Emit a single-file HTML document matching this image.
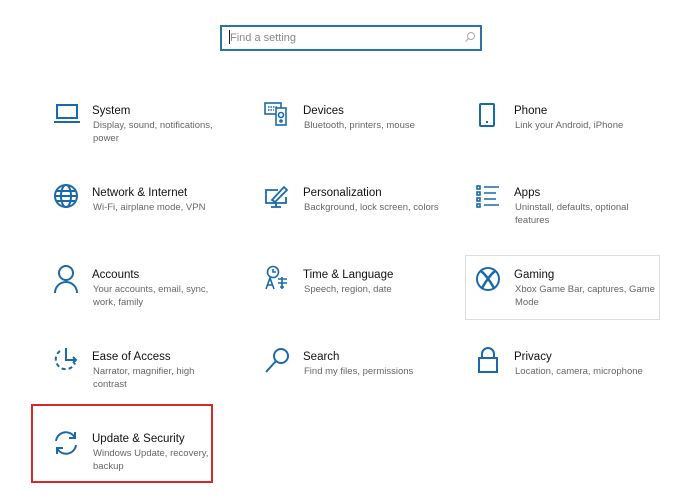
<!DOCTYPE html>
<html><head><meta charset="utf-8"><style>
body{margin:0;width:700px;height:500px;background:#fff;position:relative;font-family:"Liberation Sans",sans-serif;overflow:hidden}
.t{position:absolute;font-size:11.5px;color:#111;white-space:nowrap;margin-top:2px}
.s{position:absolute;font-size:9.5px;color:#666;line-height:12.5px;width:130px;margin-top:1px}
svg{position:absolute;fill:none;stroke:#1a6aa8;stroke-width:2;margin-top:2px}
</style></head><body>
<div style="position:absolute;left:220px;top:25px;width:258px;height:22px;border:2px solid #2a73a8"></div>
<div style="position:absolute;left:229px;top:30px;width:1px;height:14px;background:#222"></div>
<div class="t" style="left:230px;top:30px;color:#888;font-size:11px">Find a setting</div>
<svg style="left:464px;top:29px;stroke:#aaa;stroke-width:1" width="12" height="12"><circle cx="7" cy="5" r="3.5"/><path d="M4.5 7.5L1.5 10.5"/></svg>

<div style="position:absolute;left:465px;top:255px;width:193px;height:63px;border:1px solid #ddd"></div>
<div style="position:absolute;left:31px;top:404px;width:178px;height:75px;border:2px solid #d42a2a"></div>

<!-- col1 -->
<div class="t" style="left:92px;top:103px">System</div>
<div class="s" style="left:93px;top:119px">Display, sound, notifications, power</div>
<svg style="left:53px;top:100px" width="28" height="24"><rect x="4" y="3" width="20" height="13"/><path d="M1 20h26"/></svg>

<div class="t" style="left:92px;top:185px">Network &amp; Internet</div>
<div class="s" style="left:93px;top:201px">Wi-Fi, airplane mode, VPN</div>
<svg style="left:53px;top:181px" width="26" height="26"><circle cx="13" cy="13" r="11"/><ellipse cx="13" cy="13" rx="5" ry="11"/><path d="M2 13h22M4 8h18M4 18h18"/></svg>

<div class="t" style="left:92px;top:267px">Accounts</div>
<div class="s" style="left:93px;top:283px">Your accounts, email, sync, work, family</div>
<svg style="left:53px;top:262px" width="26" height="30"><circle cx="13" cy="9" r="7"/><path d="M2 29a11 11 0 0 1 22 0"/></svg>

<div class="t" style="left:92px;top:349px">Ease of Access</div>
<div class="s" style="left:93px;top:365px">Narrator, magnifier, high contrast</div>
<svg style="left:52px;top:344px" width="28" height="28"><path d="M8 5A10 10 0 1 0 23 17" stroke-dasharray="4 3"/><path d="M14 2v12h10M21 11l3 3-3 3"/></svg>

<div class="t" style="left:92px;top:431px">Update &amp; Security</div>
<div class="s" style="left:93px;top:447px">Windows Update, recovery, backup</div>
<svg style="left:52px;top:427px" width="28" height="28"><path d="M4 12A10 10 0 0 1 23 9M24 16A10 10 0 0 1 5 19M23 3v6h-6M5 25v-6h6"/></svg>

<!-- col2 -->
<div class="t" style="left:303px;top:103px">Devices</div>
<div class="s" style="left:304px;top:119px;width:150px">Bluetooth, printers, mouse</div>
<svg style="left:264px;top:99px;stroke-width:1.6" width="28" height="28"><rect x="1" y="2" width="16" height="11"/><path d="M4 6h10M4 9h6" stroke-dasharray="1.5 1"/><rect x="12" y="7" width="10" height="17" fill="#fff"/><circle cx="17" cy="14" r="2.5"/><circle cx="17" cy="20" r="1"/></svg>

<div class="t" style="left:303px;top:185px">Personalization</div>
<div class="s" style="left:304px;top:201px;width:160px">Background, lock screen, colors</div>
<svg style="left:264px;top:182px;stroke-width:1.8" width="28" height="28"><path d="M14 6H2v13h20v-6M12 19v4M7 23h10M8 16l12-13 3 3-12 12z"/></svg>

<div class="t" style="left:303px;top:267px">Time &amp; Language</div>
<div class="s" style="left:304px;top:283px;width:150px">Speech, region, date</div>
<svg style="left:264px;top:263px;stroke-width:1.6" width="28" height="28"><circle cx="9" cy="7" r="5.5"/><path d="M9 4v3h3M2 24l4-11 4 11M3.5 20h5M14 14h9M18 12v12M14 18h9M16 22h4"/></svg>

<div class="t" style="left:303px;top:349px">Search</div>
<div class="s" style="left:304px;top:365px;width:150px">Find my files, permissions</div>
<svg style="left:264px;top:344px" width="28" height="28"><circle cx="17" cy="10" r="7"/><path d="M12 15L2 26"/></svg>

<!-- col3 -->
<div class="t" style="left:514px;top:103px">Phone</div>
<div class="s" style="left:515px;top:119px;width:140px">Link your Android, iPhone</div>
<svg style="left:478px;top:100px" width="20" height="28"><rect x="2" y="2" width="14" height="22" rx="1"/><path d="M8 20h2"/></svg>

<div class="t" style="left:514px;top:185px">Apps</div>
<div class="s" style="left:515px;top:201px;width:130px">Uninstall, defaults, optional features</div>
<svg style="left:475px;top:182px;stroke-width:1.6" width="28" height="26"><rect x="2" y="2" width="3" height="3"/><rect x="2" y="8" width="3" height="3"/><rect x="2" y="14" width="3" height="3"/><rect x="2" y="20" width="3" height="3"/><path d="M9 3h15M9 9h12M9 15h12M9 21h15"/></svg>

<div class="t" style="left:514px;top:267px">Gaming</div>
<div class="s" style="left:515px;top:283px;width:140px">Xbox Game Bar, captures, Game Mode</div>
<svg style="left:475px;top:264px" width="26" height="26"><circle cx="13" cy="13" r="11"/><path d="M6 5c5 4 9 10 13 17M20 5c-5 4-9 10-13 17" stroke-width="2.5"/></svg>

<div class="t" style="left:514px;top:349px">Privacy</div>
<div class="s" style="left:515px;top:365px;width:140px">Location, camera, microphone</div>
<svg style="left:476px;top:344px" width="24" height="28"><path d="M6 12V8a6 6 0 0 1 12 0v4"/><rect x="3" y="12" width="18" height="14"/></svg>
</body></html>
